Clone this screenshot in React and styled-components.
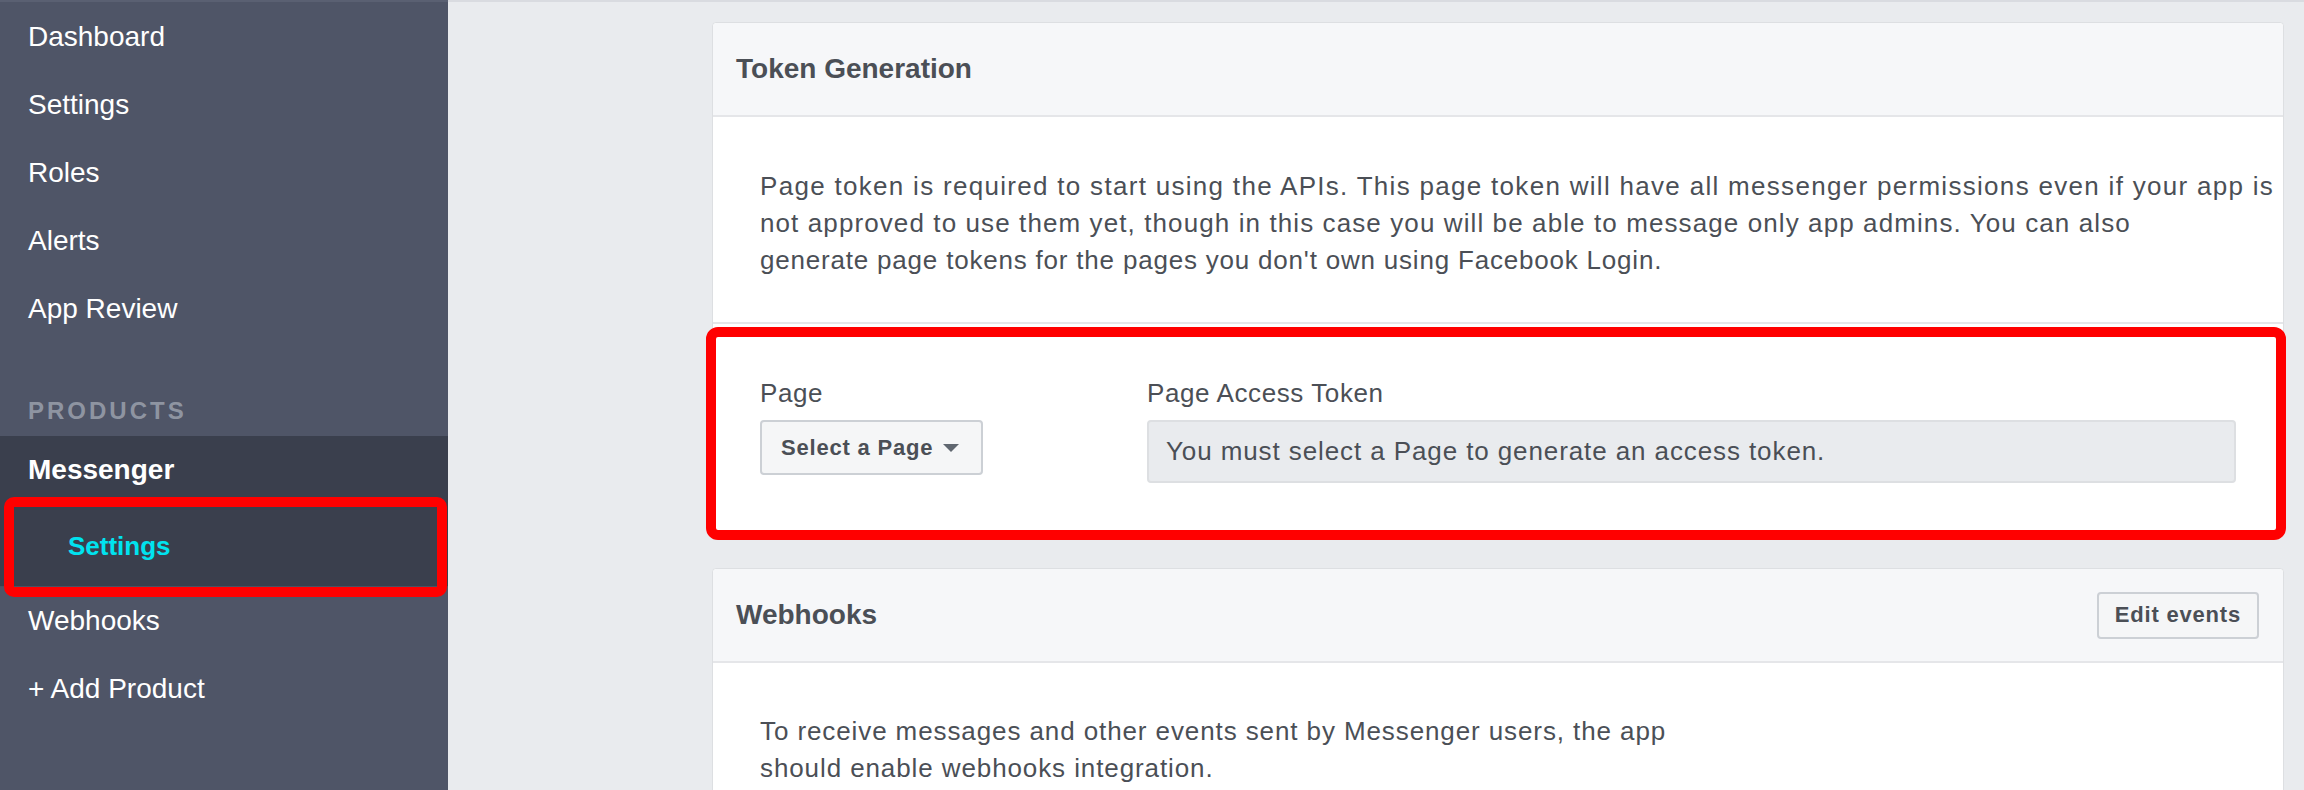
import React from "react";
import styled, { createGlobalStyle } from "styled-components";

const GlobalStyle = createGlobalStyle`
  html, body {
    margin: 0;
    padding: 0;
  }
  body {
    font-family: "Liberation Sans", Arial, Helvetica, sans-serif;
    background: #e9ebee;
    overflow: hidden;
  }
  * {
    box-sizing: border-box;
  }
`;

const Layout = styled.div`
  display: flex;
  width: 2304px;
  height: 790px;
  overflow: hidden;
`;

const Sidebar = styled.nav`
  width: 448px;
  flex-shrink: 0;
  display: flex;
  flex-direction: column;
  padding-top: 1px;
  background: #4f5567;
  border-top: 2px solid #5a6072;
`;

const NavItem = styled.div`
  height: 68px;
  line-height: 68px;
  padding-left: 28px;
  font-size: 28px;
  font-weight: ${(p) => (p.$bold ? 700 : 400)};
  color: #ffffff;
  white-space: nowrap;
`;

const SectionLabel = styled.div`
  padding: 51px 28px 8px;
  line-height: 34px;
  font-size: 24px;
  font-weight: 700;
  letter-spacing: 3px;
  color: #8e94a1;
`;

const ProductGroup = styled.div`
  background: #3a3f4d;
  border-bottom: 1px solid #4b5162;
`;

const SubItem = styled.div`
  position: relative;
  height: 82px;
  padding: 3px 0 0 68px;
  line-height: 78px;
  font-size: 26px;
  font-weight: 700;
  color: #00e3ef;

  &::after {
    content: "";
    position: absolute;
    top: -7px;
    bottom: -11px;
    left: 4px;
    right: 1px;
    border: 10px solid #ff0000;
    border-radius: 10px;
  }
`;

const Main = styled.main`
  flex: 1;
  display: flex;
  flex-direction: column;
  gap: 30px;
  padding: 20px 20px 0 264px;
  background: #e9ebee;
  border-top: 2px solid #d9dbe0;
`;

const Card = styled.section`
  flex-shrink: 0;
  background: #ffffff;
  border: 1px solid #dddfe2;
  border-radius: 4px;
`;

const CardHeader = styled.header`
  height: 94px;
  display: flex;
  align-items: center;
  justify-content: space-between;
  padding: 0 24px 0 23px;
  background: #f6f7f9;
  border-bottom: 2px solid #e5e6e9;
  border-radius: 4px 4px 0 0;
`;

const CardTitle = styled.h2`
  margin: 0;
  font-size: 28px;
  font-weight: 700;
  color: #4b4f56;
`;

const CardText = styled.p`
  margin: 0;
  padding: ${(p) => p.$pad || "51px 0 43px 47px"};
  font-size: 26px;
  letter-spacing: ${(p) => p.$spacing || "0.8px"};
  line-height: 37px;
  color: #4b4f56;
  white-space: nowrap;
  border-bottom: ${(p) => (p.$divider ? "2px solid #e5e6e9" : "none")};
`;

const Line = styled.span`
  display: block;
  letter-spacing: ${(p) => p.$spacing || "inherit"};
`;

const TokenSection = styled.div`
  position: relative;
  display: grid;
  grid-template-columns: 387px 1fr;
  padding: 52px 47px 54px;

  &::after {
    content: "";
    position: absolute;
    top: 3px;
    bottom: -3px;
    left: -7px;
    right: -3px;
    border: 10px solid #ff0000;
    border-radius: 12px;
    pointer-events: none;
  }
`;

const Field = styled.div`
  display: flex;
  flex-direction: column;
  align-items: flex-start;
`;

const FieldLabel = styled.label`
  margin-bottom: 10px;
  line-height: 34px;
  font-size: 26px;
  letter-spacing: 0.6px;
  color: #4b4f56;
`;

const GrayButton = styled.button`
  display: inline-flex;
  align-items: center;
  gap: 10px;
  height: ${(p) => p.$height || "47px"};
  padding: ${(p) => p.$pad || "0 16px"};
  font-family: inherit;
  font-size: 22px;
  font-weight: 700;
  letter-spacing: 0.8px;
  color: #4b4f56;
  background: #f5f6f7;
  border: 2px solid #ccd0d5;
  border-radius: 4px;
`;

const Caret = styled.span`
  width: 0;
  height: 0;
  border-left: 8px solid transparent;
  border-right: 8px solid transparent;
  border-top: 8px solid #606770;
`;

const TokenField = styled.div`
  align-self: stretch;
  height: 63px;
  display: flex;
  align-items: center;
  padding: 0 17px;
  font-size: 26px;
  letter-spacing: 0.9px;
  color: #4b4f56;
  background: #e9ebee;
  border: 2px solid #dddfe2;
  border-radius: 4px;
`;

const navTop = ["Dashboard", "Settings", "Roles", "Alerts", "App Review"];

export default function App() {
  return (
    <>
      <GlobalStyle />
      <Layout>
        <Sidebar>
          {navTop.map((item) => (
            <NavItem key={item}>{item}</NavItem>
          ))}
          <SectionLabel>PRODUCTS</SectionLabel>
          <ProductGroup>
            <NavItem $bold>Messenger</NavItem>
            <SubItem>Settings</SubItem>
          </ProductGroup>
          <NavItem>Webhooks</NavItem>
          <NavItem>+ Add Product</NavItem>
        </Sidebar>

        <Main>
          <Card>
            <CardHeader>
              <CardTitle>Token Generation</CardTitle>
            </CardHeader>
            <CardText $divider>
              <Line $spacing="1.3px">
                Page token is required to start using the APIs. This page token
                will have all messenger permissions even if your app is
              </Line>
              <Line $spacing="1.1px">
                not approved to use them yet, though in this case you will be
                able to message only app admins. You can also
              </Line>
              <Line>
                generate page tokens for the pages you don't own using Facebook
                Login.
              </Line>
            </CardText>
            <TokenSection>
              <Field>
                <FieldLabel>Page</FieldLabel>
                <GrayButton $height="55px" $pad="0 22px 0 19px">
                  Select a Page
                  <Caret />
                </GrayButton>
              </Field>
              <Field>
                <FieldLabel>Page Access Token</FieldLabel>
                <TokenField>
                  You must select a Page to generate an access token.
                </TokenField>
              </Field>
            </TokenSection>
          </Card>

          <Card>
            <CardHeader>
              <CardTitle>Webhooks</CardTitle>
              <GrayButton>Edit events</GrayButton>
            </CardHeader>
            <CardText $pad="50px 0 50px 47px" $spacing="0.9px">
              <Line>
                To receive messages and other events sent by Messenger users,
                the app
              </Line>
              <Line>should enable webhooks integration.</Line>
            </CardText>
          </Card>
        </Main>
      </Layout>
    </>
  );
}
